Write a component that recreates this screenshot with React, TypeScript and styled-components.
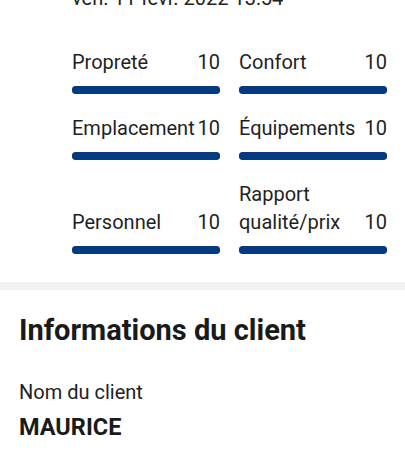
import React from "react";
import styled, { createGlobalStyle } from "styled-components";

const GlobalStyle = createGlobalStyle`
  html, body {
    margin: 0;
    padding: 0;
    background: #ffffff;
  }
  body {
    font-family: Roboto, "Noto Sans", "Liberation Sans", sans-serif;
    color: #1f1f1f;
    overflow: hidden;
  }
`;

const Page = styled.div`
  width: 405px;
  display: flex;
  flex-direction: column;
`;

const ReviewSection = styled.section`
  display: flex;
  flex-direction: column;
  padding: 0 18px 28px 72px;
`;

const DateLine = styled.div`
  margin-top: -16px;
  font-size: 20px;
  line-height: 28px;
  color: #222;
`;

const ScoreGrid = styled.div`
  margin-top: 36px;
  display: grid;
  grid-template-columns: 148px 148px;
  column-gap: 19px;
  row-gap: 20px;
`;

const ScoreCell = styled.div`
  display: flex;
  flex-direction: column;
  justify-content: flex-end;
`;

const ScoreHeader = styled.div`
  display: flex;
  align-items: flex-end;
  justify-content: space-between;
  font-size: 20px;
  line-height: 28px;
  color: #1f1f1f;
`;

const ScoreLabel = styled.span`
  flex: 1 1 auto;
  min-width: 0;
`;

const ScoreValue = styled.span`
  flex: 0 0 auto;
  margin-left: 3px;
`;

const Bar = styled.div`
  margin-top: 10px;
  height: 8px;
  border-radius: 3px;
  background: #e6e6e6;
  overflow: hidden;
`;

const BarFill = styled.div`
  height: 100%;
  background: #063a80;
  border-radius: 3px;
`;

const Divider = styled.div`
  height: 8px;
  background: #f2f2f2;
`;

const ClientSection = styled.section`
  display: flex;
  flex-direction: column;
  padding: 22px 19px 20px;
`;

const Heading = styled.h2`
  margin: 0;
  font-size: 29px;
  line-height: 36px;
  font-weight: 700;
  color: #1a1a1a;
`;

const FieldLabel = styled.div`
  margin-top: 30px;
  font-size: 20px;
  line-height: 28px;
  color: #222;
`;

const FieldValue = styled.div`
  margin-top: 6px;
  font-size: 23.5px;
  line-height: 30px;
  font-weight: 700;
  color: #1a1a1a;
`;

const scores: { label: React.ReactNode; value: number }[] = [
  { label: "Propreté", value: 10 },
  { label: "Confort", value: 10 },
  { label: "Emplacement", value: 10 },
  { label: "Équipements", value: 10 },
  { label: "Personnel", value: 10 },
  { label: "Rapport qualité/prix", value: 10 },
];

export default function App() {
  return (
    <>
      <GlobalStyle />
      <Page>
        <ReviewSection>
          <DateLine>ven. 11 févr. 2022 13:54</DateLine>
          <ScoreGrid>
            {scores.map((s, i) => (
              <ScoreCell key={i}>
                <ScoreHeader>
                  <ScoreLabel>{s.label}</ScoreLabel>
                  <ScoreValue>{s.value}</ScoreValue>
                </ScoreHeader>
                <Bar>
                  <BarFill style={{ width: `${s.value * 10}%` }} />
                </Bar>
              </ScoreCell>
            ))}
          </ScoreGrid>
        </ReviewSection>
        <Divider />
        <ClientSection>
          <Heading>Informations du client</Heading>
          <FieldLabel>Nom du client</FieldLabel>
          <FieldValue>MAURICE</FieldValue>
        </ClientSection>
      </Page>
    </>
  );
}
